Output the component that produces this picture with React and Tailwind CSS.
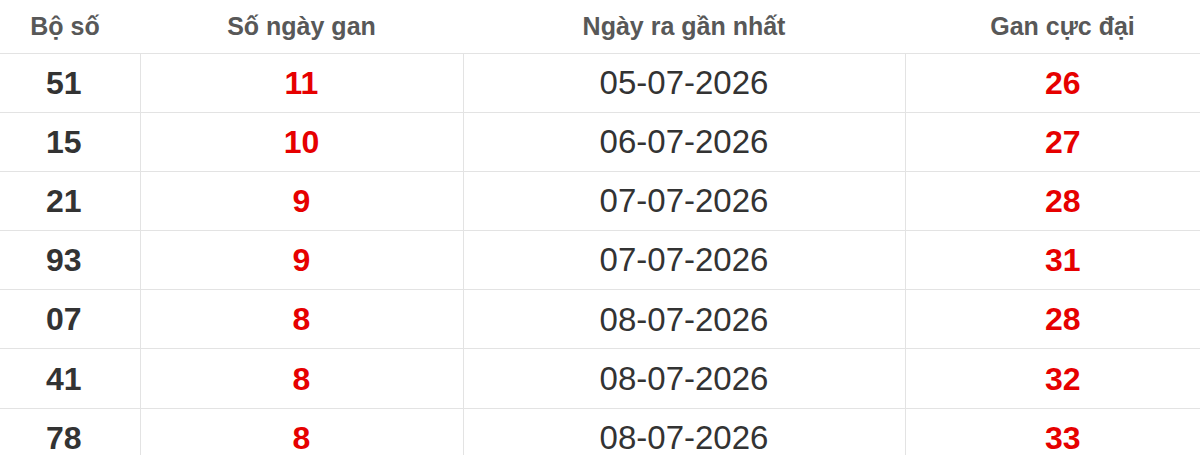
const rows = [
  ["51", "11", "05-07-2026", "26"],
  ["15", "10", "06-07-2026", "27"],
  ["21", "9", "07-07-2026", "28"],
  ["93", "9", "07-07-2026", "31"],
  ["07", "8", "08-07-2026", "28"],
  ["41", "8", "08-07-2026", "32"],
  ["78", "8", "08-07-2026", "33"],
];

export default function App() {
  return (
    <div className="w-[1200px] h-[455px] overflow-hidden bg-white" style={{ fontFamily: '"Liberation Sans", Arial, sans-serif' }}>
      <table className="w-[1220px] border-collapse table-fixed">
        <colgroup>
          <col className="w-[140px]" />
          <col className="w-[323px]" />
          <col className="w-[442px]" />
          <col className="w-[315px]" />
        </colgroup>
        <thead>
          <tr className="h-[53px] border-b border-[#e3e3e3] text-[25px] font-bold text-[#585858]">
            <th className="pr-[10px] font-bold">Bộ số</th>
            <th className="font-bold">Số ngày gan</th>
            <th className="font-bold">Ngày ra gần nhất</th>
            <th className="font-bold">Gan cực đại</th>
          </tr>
        </thead>
        <tbody>
          {rows.map((r, i) => (
            <tr key={i} className="h-[59.2px] border-b border-[#e3e3e3] text-center">
              <td className="pr-[12px] text-[32px] font-bold text-[#333]">{r[0]}</td>
              <td className="border-l border-[#e3e3e3] text-[32px] font-bold text-[#e60000]">{r[1]}</td>
              <td className="border-l border-[#e3e3e3] text-[33px] text-[#333]">{r[2]}</td>
              <td className="border-l border-[#e3e3e3] text-[32px] font-bold text-[#e60000]">{r[3]}</td>
            </tr>
          ))}
        </tbody>
      </table>
    </div>
  );
}
